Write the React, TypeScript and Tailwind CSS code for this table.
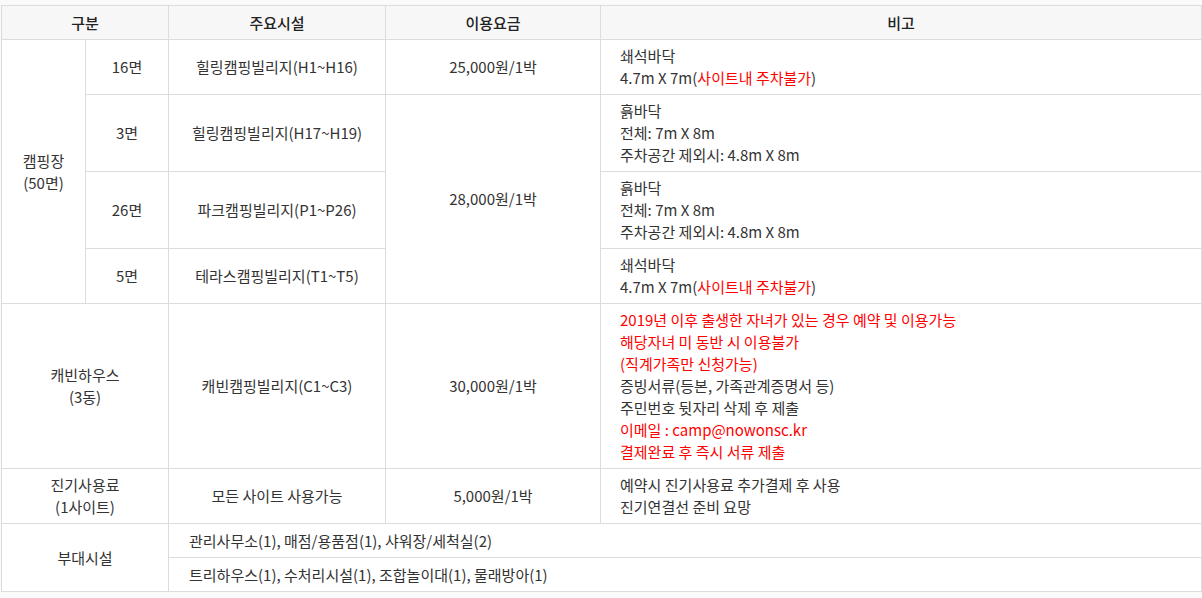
const RED = 'text-[#ff0000]';

const th = 'border border-[#dcdcdc] bg-[#f7f7f7] font-medium text-[#222] text-center align-middle';
const td = 'border border-[#dcdcdc] text-center align-middle';
const note = 'border border-[#dcdcdc] text-left align-middle pl-[19px]';

export default function App() {
  return (
    <div
      className="h-[598px] overflow-hidden bg-[#fafafa] pt-[5px] pl-[1px] text-[15px] leading-[22px] text-[#333]"
      style={{ fontFamily: '"Noto Sans CJK KR", "Noto Sans", sans-serif' }}
    >
      <table className="w-[1200px] table-fixed border-collapse bg-white">
        <colgroup>
          <col className="w-[84px]" />
          <col className="w-[83px]" />
          <col className="w-[217px]" />
          <col className="w-[215px]" />
          <col className="w-[601px]" />
        </colgroup>
        <thead>
          <tr className="h-[34px]">
            <th colSpan={2} className={th}>구분</th>
            <th className={th}>주요시설</th>
            <th className={th}>이용요금</th>
            <th className={th}>비고</th>
          </tr>
        </thead>
        <tbody>
          <tr className="h-[55px]">
            <td rowSpan={4} className={td}>
              캠핑장
              <br />
              (50면)
            </td>
            <td className={td}>16면</td>
            <td className={td}>힐링캠핑빌리지(H1~H16)</td>
            <td className={td}>25,000원/1박</td>
            <td className={note}>
              쇄석바닥
              <br />
              4.7m X 7m(<span className={RED}>사이트내 주차불가</span>)
            </td>
          </tr>
          <tr className="h-[77px]">
            <td className={td}>3면</td>
            <td className={td}>힐링캠핑빌리지(H17~H19)</td>
            <td rowSpan={3} className={td}>28,000원/1박</td>
            <td className={note}>
              흙바닥
              <br />
              전체: 7m X 8m
              <br />
              주차공간 제외시: 4.8m X 8m
            </td>
          </tr>
          <tr className="h-[77px]">
            <td className={td}>26면</td>
            <td className={td}>파크캠핑빌리지(P1~P26)</td>
            <td className={note}>
              흙바닥
              <br />
              전체: 7m X 8m
              <br />
              주차공간 제외시: 4.8m X 8m
            </td>
          </tr>
          <tr className="h-[55px]">
            <td className={td}>5면</td>
            <td className={td}>테라스캠핑빌리지(T1~T5)</td>
            <td className={note}>
              쇄석바닥
              <br />
              4.7m X 7m(<span className={RED}>사이트내 주차불가</span>)
            </td>
          </tr>
          <tr className="h-[165px]">
            <td colSpan={2} className={td}>
              캐빈하우스
              <br />
              (3동)
            </td>
            <td className={td}>캐빈캠핑빌리지(C1~C3)</td>
            <td className={td}>30,000원/1박</td>
            <td className={note}>
              <span className={RED}>
                2019년 이후 출생한 자녀가 있는 경우 예약 및 이용가능
                <br />
                해당자녀 미 동반 시 이용불가
                <br />
                (직계가족만 신청가능)
              </span>
              <br />
              증빙서류(등본, 가족관계증명서 등)
              <br />
              주민번호 뒷자리 삭제 후 제출
              <br />
              <span className={RED}>
                이메일 : camp@nowonsc.kr
                <br />
                결제완료 후 즉시 서류 제출
              </span>
            </td>
          </tr>
          <tr className="h-[55px]">
            <td colSpan={2} className={td}>
              진기사용료
              <br />
              (1사이트)
            </td>
            <td className={td}>모든 사이트 사용가능</td>
            <td className={td}>5,000원/1박</td>
            <td className={note}>
              예약시 진기사용료 추가결제 후 사용
              <br />
              진기연결선 준비 요망
            </td>
          </tr>
          <tr className="h-[34px]">
            <td colSpan={2} rowSpan={2} className={td}>부대시설</td>
            <td colSpan={3} className="border border-[#dcdcdc] text-left align-middle pl-[20px]">
              관리사무소(1), 매점/용품점(1), 샤워장/세척실(2)
            </td>
          </tr>
          <tr className="h-[34px]">
            <td colSpan={3} className="border border-[#dcdcdc] text-left align-middle pl-[20px]">
              트리하우스(1), 수처리시설(1), 조합놀이대(1), 물래방아(1)
            </td>
          </tr>
        </tbody>
      </table>
    </div>
  );
}
